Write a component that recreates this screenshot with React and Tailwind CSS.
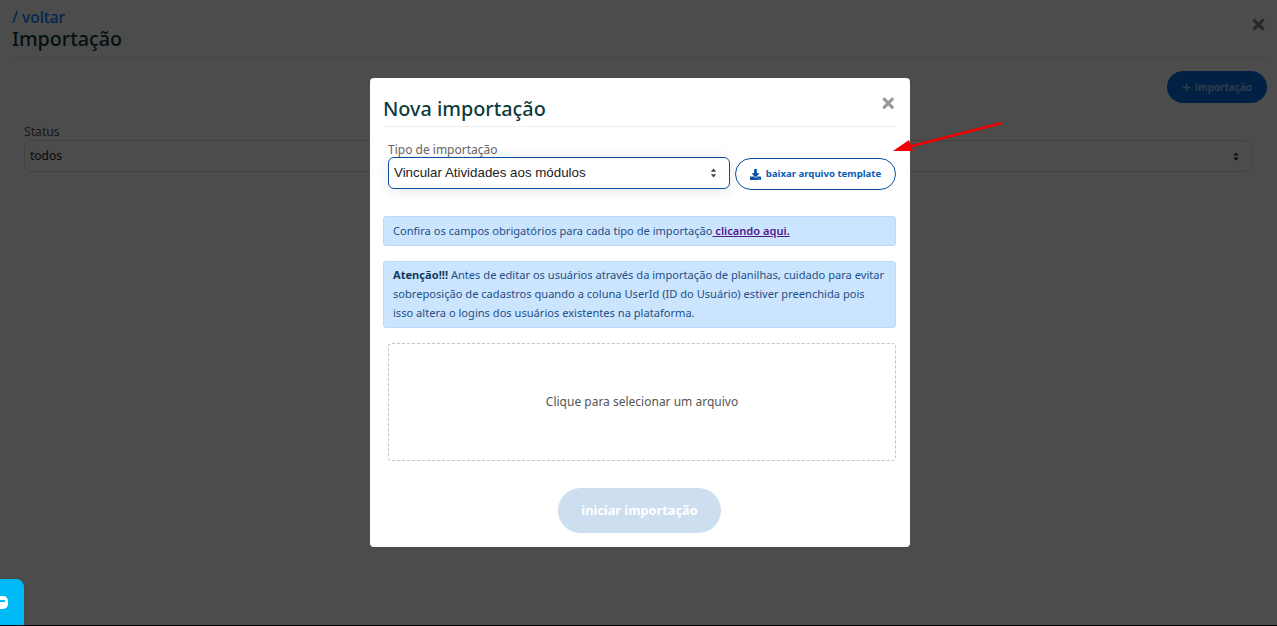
import React from 'react'
import { FaDownload, FaPlus, FaTimes } from 'react-icons/fa'

const SelectArrows = ({ className }) => (
  <svg viewBox="0 0 8 12" className={className} fill="currentColor">
    <path d="M4 0.5 L7.2 4.6 L0.8 4.6 Z" />
    <path d="M4 11.5 L7.2 7.4 L0.8 7.4 Z" />
  </svg>
)

const App = () => {
  return (
    <div className="relative h-[626px] w-full overflow-hidden border-b border-black bg-white font-['Noto_Sans',sans-serif]">
      {/* Page behind the modal */}
      <div className="pt-[9px] pr-[10px] pl-3">
        <div className="flex items-start justify-between border-b border-[#e4e4e4] pb-[6px]">
          <div>
            <a className="block text-[15.5px] leading-[17px] font-medium text-[#0a7fff]">/ voltar</a>
            <h1 className="text-[19.7px] leading-[25px] font-medium text-[#0d3b3e]">Importação</h1>
          </div>
          <FaTimes className="mt-[7px] text-[17px] text-[#888]" />
        </div>
        <div className="mt-[13px] flex justify-end">
          <button className="flex h-8 w-[100px] items-center justify-center gap-1 rounded-full bg-[#0070e0] text-[9.9px] font-bold text-white/60">
            <FaPlus className="text-[9px]" />
            importação
          </button>
        </div>
        <div className="mt-5 pr-[15px] pl-3">
          <label className="block text-[12.2px] leading-[17px] text-[#555]">Status</label>
          <div className="flex h-8 items-center justify-between rounded-md border border-[#ddd] pr-3 pl-[5px] text-[12px] text-[#222]">
            todos
            <SelectArrows className="h-[9px] w-[6px] text-[#222]" />
          </div>
        </div>
      </div>

      {/* Overlay */}
      <div className="absolute inset-0 flex justify-center bg-[rgba(0,0,0,0.7)] pt-[78px] pl-[3px]">
        <div className="h-[469px] w-[540px] rounded-[4px] bg-white pr-[14px] pl-[13px]">
          <div className="flex h-[49px] items-start justify-between border-b border-[#eee] pt-[16px]">
            <h2 className="text-[19.8px] leading-[30px] font-medium text-[#0d3b3e]">Nova importação</h2>
            <FaTimes className="mt-[1px] text-[16.5px] text-[#999]" />
          </div>

          <div className="mt-[15px] flex pl-[5px]">
            <div className="w-[342px]">
              <label className="block text-[12px] leading-[15px] text-[#666]">Tipo de importação</label>
              <div className="flex h-8 items-center justify-between rounded-md border border-[#0a4ea3] pr-3 pl-[5px] font-['Liberation_Sans',sans-serif] text-[13.33px] text-[#222] shadow-[0_2px_14px_rgba(0,0,0,0.1)]">
                Vincular Atividades aos módulos
                <SelectArrows className="h-[10px] w-[7px] text-[#444]" />
              </div>
            </div>
            <button className="mt-[16px] ml-[5px] flex h-8 w-[161px] items-center justify-center gap-[5px] rounded-full border border-[#0a4ea3] text-[9.6px] font-bold text-[#0a5cb8]">
              <FaDownload className="text-[11px] text-[#0a4ea3]" />
              baixar arquivo template
            </button>
          </div>

          <div className="mt-[26px] flex h-[30px] items-center rounded-[3px] border border-[#b8daff] bg-[#cce5ff] px-[9px] text-[11.1px] text-[#1f4f86]">
            <span className="whitespace-pre">Confira os campos obrigatórios para cada tipo de importação</span>
            <a className="whitespace-pre font-semibold text-[#551a8b] underline"> clicando aqui.</a>
          </div>

          <div className="mt-[15px] h-[67px] rounded-[3px] border border-[#b8daff] bg-[#cce5ff] px-[9px] pt-[3px] text-[11.1px] leading-[19px] text-[#1f4f86]">
            <p className="whitespace-nowrap">
              <strong className="font-bold text-[#0d3b5e]">Atenção!!!</strong> Antes de editar os usuários através da importação de planilhas, cuidado para evitar
            </p>
            <p className="whitespace-nowrap">sobreposição de cadastros quando a coluna UserId (ID do Usuário) estiver preenchida pois</p>
            <p className="whitespace-nowrap">isso altera o logins dos usuários existentes na plataforma.</p>
          </div>

          <div className="mt-[15px] ml-[5px] flex h-[118px] items-center justify-center rounded-[4px] border border-dashed border-[#c4c4c4] text-[12px] text-[#555]">
            Clique para selecionar um arquivo
          </div>

          <div className="mt-[27px] flex justify-center">
            <button className="h-[45px] w-[163px] rounded-full bg-[#cddef0] text-[12.75px] font-bold text-white">
              iniciar importação
            </button>
          </div>
        </div>
      </div>

      {/* Chat widget */}
      <div className="absolute bottom-0 left-0 flex h-[46px] w-6 items-center rounded-tr-lg bg-[#00b9f7] shadow-md">
        <div className="relative h-[13px] w-2 rounded-r-[5px] bg-white">
          <div className="absolute top-1 left-0 h-[2px] w-[5px] bg-[#00b9f7]" />
        </div>
      </div>

      {/* Annotation arrow */}
      <svg className="absolute top-[118px] left-[890px]" width="116" height="38" viewBox="0 0 116 38">
        <path d="M112 5 L18 29" stroke="#f00000" strokeWidth="2.6" fill="none" />
        <path d="M3 33 L19 22 L23 33 Z" fill="#f00000" />
      </svg>
    </div>
  )
}

export default App
